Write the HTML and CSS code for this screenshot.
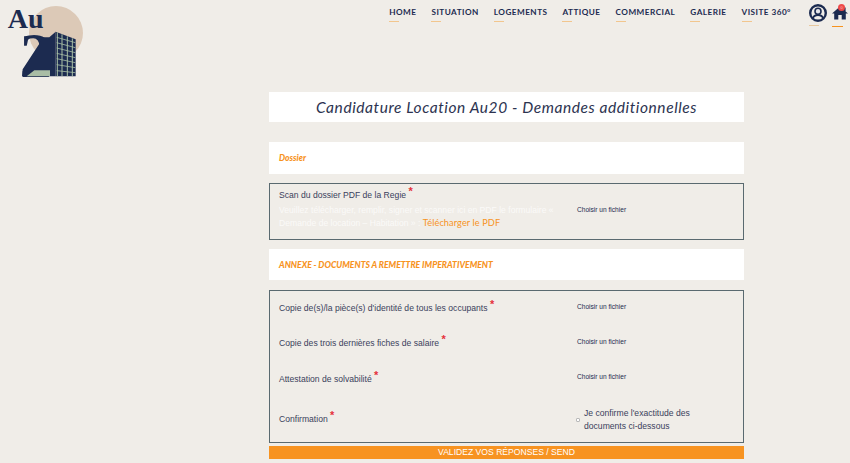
FILE: index.html
```html
<!DOCTYPE html>
<html lang="fr">
<head>
<meta charset="utf-8">
<title>Candidature Location Au20</title>
<link rel="stylesheet" href="styles.css">
</head>
<body>
<header class="site-header">
  <a class="logo" href="#" aria-label="Au20">
    <svg class="logo-svg" viewBox="0 0 270 240" width="90" height="80">
      <circle cx="168" cy="99" r="81" fill="#dcc9b7"/>
      <text x="23" y="83" class="logo-au">Au</text>
      <text x="60" y="230" class="logo-two">2</text>
      <polygon points="66,229 68,208 122,125 128,112 148,112 167,95 167,229" fill="#1c2b50"/>
      <polygon points="167,95 227,118 227,229 167,229" fill="#1c2b50"/>
      <polygon points="80,229 103,211 150,211 150,229" fill="#a9bda5"/>
      <g stroke="#a9c0a6" fill="none">
        <path stroke-width="3" d="M172 97V229M186 103V229M202 109V229M217 115V229"/>
        <path stroke-width="2.4" d="M170 112L226 128M170 128L226 143M170 144L226 158M170 160L226 173M170 176L226 188M170 194L226 203M170 212L226 218"/>
      </g>
    </svg>
  </a>
  <nav class="nav">
    <a class="nav-link" href="#">HOME</a>
    <a class="nav-link" href="#">SITUATION</a>
    <a class="nav-link" href="#">LOGEMENTS</a>
    <a class="nav-link" href="#">ATTIQUE</a>
    <a class="nav-link" href="#">COMMERCIAL</a>
    <a class="nav-link" href="#">GALERIE</a>
    <a class="nav-link" href="#">VISITE 360°</a>
    <a class="nav-icon nav-icon-user" href="#" aria-label="Compte">
      <svg viewBox="0 0 18 18" width="18" height="18">
        <circle cx="9" cy="9" r="7.8" fill="#f0ede8" stroke="#1c2b50" stroke-width="2.4"/>
        <circle cx="9" cy="7.2" r="3" fill="#e6e6ea" stroke="#1c2b50" stroke-width="1.6"/>
        <path d="M3.8 14.5C4.6 11.8 6.5 11 9 11S13.4 11.8 14.2 14.5" fill="none" stroke="#1c2b50" stroke-width="1.8"/>
      </svg>
    </a>
    <a class="nav-icon nav-icon-home" href="#" aria-label="Accueil">
      <svg viewBox="0 0 16 14" width="16" height="14">
        <path d="M8 0.5L0 7.5H2.2V13.5H6.3V9H9.7V13.5H13.8V7.5H16L13.6 5.4V1.5H11.6V3.6Z" fill="#1c2b50"/>
      </svg>
      <span class="badge">0</span>
    </a>
  </nav>
</header>

<main class="form-wrap">
  <h1 class="title">Candidature Location Au20 - Demandes additionnelles</h1>

  <section class="band band-dossier"><h2 class="band-title">Dossier</h2></section>

  <section class="box box-scan">
    <div class="scan-text">
      <p class="field-label">Scan du dossier PDF de la Regie <span class="req">*</span></p>
      <p class="help">Veuillez télécharger, remplir, signer et scanner ici en PDF le formulaire « Demande de location – Habitation » : <a class="help-link" href="#">Télécharger le PDF</a></p>
    </div>
    <span class="file-btn file-btn-scan">Choisir un fichier</span>
  </section>

  <section class="band band-annexe"><h2 class="band-title">ANNEXE - DOCUMENTS A REMETTRE IMPERATIVEMENT</h2></section>

  <section class="box box-docs">
    <div class="row row-a">
      <p class="field-label">Copie de(s)/la pièce(s) d'identité de tous les occupants <span class="req">*</span></p>
      <span class="file-btn file-btn-up">Choisir un fichier</span>
    </div>
    <div class="row row-b">
      <p class="field-label">Copie des trois dernières fiches de salaire <span class="req">*</span></p>
      <span class="file-btn">Choisir un fichier</span>
    </div>
    <div class="row row-c">
      <p class="field-label">Attestation de solvabilité <span class="req">*</span></p>
      <span class="file-btn file-btn-up">Choisir un fichier</span>
    </div>
    <div class="row row-d">
      <p class="field-label">Confirmation <span class="req">*</span></p>
      <label class="confirm"><span class="check"></span><span class="confirm-text">Je confirme l'exactitude des documents ci-dessous</span></label>
    </div>
  </section>

  <button class="submit" type="button">VALIDEZ VOS RÉPONSES / SEND</button>
</main>
</body>
</html>
```

FILE: styles.css
```css
* { box-sizing: border-box; }
html, body { margin: 0; padding: 0; }
body {
  background: #f0ede8;
  color: #3a3f5c;
  font-family: "Liberation Sans", Arial, sans-serif;
  overflow: hidden;
  height: 463px;
}
p, h1, h2 { margin: 0; }
a { text-decoration: none; color: inherit; }

.site-header {
  display: flex;
  justify-content: space-between;
  align-items: flex-start;
  height: 92px;
}
.logo { display: block; width: 90px; height: 80px; }
.logo-svg { display: block; overflow: visible; }
.logo-au {
  font-family: "Liberation Serif", serif;
  font-weight: 700;
  font-size: 84px;
  fill: #1c2b50;
}
.logo-two {
  font-family: "Liberation Serif", serif;
  font-weight: 700;
  font-size: 190px;
  fill: #1c2b50;
}

.nav {
  display: flex;
  align-items: flex-start;
  padding-right: 2px;
}
.nav-link {
  position: relative;
  display: block;
  margin-right: 15px;
  padding-top: 7px;
  height: 22px;
  font-family: "Lato", sans-serif;
  font-weight: 700;
  font-size: 8.2px;
  line-height: 11px;
  letter-spacing: 0.47px;
  color: #1c2b50;
  white-space: nowrap;
}
.nav-link::after {
  content: "";
  position: absolute;
  left: 0;
  top: 21px;
  width: 10px;
  height: 1px;
  background: #f2c68e;
}
.nav-icon { position: relative; display: block; }
.nav-icon svg { display: block; }
.nav-icon-user { margin: 4px 5px 0 3px; height: 22px; }
.nav-icon-user::after {
  content: "";
  position: absolute;
  left: 0;
  top: 21px;
  width: 10px;
  height: 1px;
  background: #e8c9a0;
}
.nav-icon-home { margin-top: 6px; height: 21px; }
.nav-icon-home::after {
  content: "";
  position: absolute;
  left: 0;
  top: 20px;
  width: 11px;
  height: 1px;
  background: #f7931e;
}
.badge {
  position: absolute;
  right: 3px;
  top: -2px;
  width: 7px;
  height: 7px;
  border-radius: 50%;
  background: #ee4b4b;
  color: #f8c0c0;
  font-size: 4px;
  line-height: 7px;
  text-align: center;
}

.form-wrap {
  width: 475px;
  margin-left: 269px;
  display: flex;
  flex-direction: column;
}
.title {
  background: #fff;
  height: 30px;
  text-align: center;
  font-family: "Lato", sans-serif;
  font-style: italic;
  font-weight: 400;
  font-size: 15.5px;
  line-height: 31px;
  letter-spacing: 0.58px;
  color: #2c3350;
}
.band {
  background: #fff;
  display: flex;
  align-items: center;
  padding-left: 10px;
}
.band-dossier { height: 32px; margin-top: 20px; }
.band-annexe { height: 31px; margin-top: 9px; }
.band-title {
  font-family: "Lato", sans-serif;
  font-style: italic;
  font-weight: 900;
  font-size: 8.6px;
  color: #f7931e;
}
.box {
  border: 1px solid #5a6a70;
  padding-left: 9px;
}
.box-scan {
  height: 57px;
  margin-top: 9px;
  display: grid;
  grid-template-columns: 298px 1fr;
  align-items: center;
}
.box-docs {
  height: 153px;
  margin-top: 10px;
}
.row {
  display: grid;
  grid-template-columns: 298px 1fr;
  align-items: center;
}
.row-a { height: 32px; }
.row-b { height: 37px; }
.row-c { height: 35px; }
.row-d { height: 46px; }
.field-label {
  font-size: 8.6px;
  line-height: 12px;
  color: #3a3f5c;
}
.req {
  display: inline-block;
  color: #e5303a;
  font-size: 11px;
  font-weight: 700;
  line-height: 8px;
  vertical-align: 3px;
}
.scan-text { align-self: start; padding-top: 3px; }
.help {
  margin-top: 3px;
  width: 280px;
  font-size: 8.6px;
  line-height: 13px;
  color: #fbfaf8;
}
.help-link {
  display: inline-block;
  font-family: "Lato", sans-serif;
  color: #f7931e;
  font-size: 9.2px;
  line-height: 11px;
  letter-spacing: 0.1px;
}
.file-btn {
  font-size: 6.6px;
  line-height: 9px;
  color: #1c2b50;
}
.file-btn-up { margin-top: -2px; }
.file-btn-scan { align-self: start; padding-top: 21px; }
.confirm { display: flex; align-items: center; gap: 4px; margin-top: 4px; margin-left: -1px; }
.check {
  flex: none;
  width: 4px;
  height: 4px;
  border: 1px solid #b9b9b9;
  background: #fff;
  border-radius: 1px;
}
.confirm-text {
  width: 120px;
  font-size: 8.6px;
  line-height: 13px;
  color: #3a3f5c;
}
.submit {
  display: block;
  width: 100%;
  height: 13px;
  margin-top: 3px;
  padding: 0;
  border: 0;
  background: #f79321;
  color: #fff;
  font-family: "Liberation Sans", Arial, sans-serif;
  font-size: 8.6px;
  line-height: 13px;
  text-align: center;
}
```
